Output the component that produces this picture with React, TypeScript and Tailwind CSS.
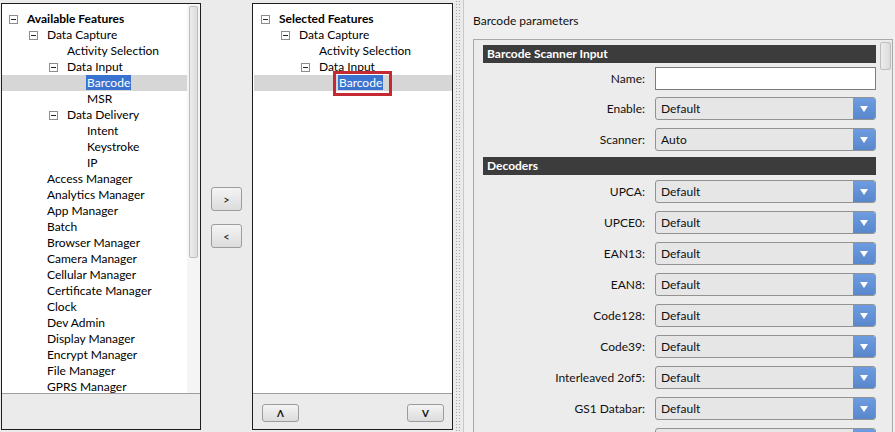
import React from "react";

type Node = { level: number; label: string; exp?: boolean; bold?: boolean; sel?: boolean; framed?: boolean };

const leftTree: Node[] = [
  { level: 0, label: "Available Features", exp: true, bold: true },
  { level: 1, label: "Data Capture", exp: true },
  { level: 2, label: "Activity Selection" },
  { level: 2, label: "Data Input", exp: true },
  { level: 3, label: "Barcode", sel: true },
  { level: 3, label: "MSR" },
  { level: 2, label: "Data Delivery", exp: true },
  { level: 3, label: "Intent" },
  { level: 3, label: "Keystroke" },
  { level: 3, label: "IP" },
  { level: 1, label: "Access Manager" },
  { level: 1, label: "Analytics Manager" },
  { level: 1, label: "App Manager" },
  { level: 1, label: "Batch" },
  { level: 1, label: "Browser Manager" },
  { level: 1, label: "Camera Manager" },
  { level: 1, label: "Cellular Manager" },
  { level: 1, label: "Certificate Manager" },
  { level: 1, label: "Clock" },
  { level: 1, label: "Dev Admin" },
  { level: 1, label: "Display Manager" },
  { level: 1, label: "Encrypt Manager" },
  { level: 1, label: "File Manager" },
  { level: 1, label: "GPRS Manager" },
];

const midTree: Node[] = [
  { level: 0, label: "Selected Features", exp: true, bold: true },
  { level: 1, label: "Data Capture", exp: true },
  { level: 2, label: "Activity Selection" },
  { level: 2, label: "Data Input", exp: true },
  { level: 3, label: "Barcode", sel: true, framed: true },
];

const pads = ["pl-[7px]", "pl-[27px]", "pl-[47px]", "pl-[67px]"];

function Expander() {
  return (
    <span className="w-[9px] h-[9px] border border-[#8c8c8c] bg-white flex items-center justify-center shrink-0">
      <span className="w-[5px] h-px bg-[#222]" />
    </span>
  );
}

function TreeRow({ n }: { n: Node }) {
  return (
    <div className={`h-[16px] flex items-center ${pads[n.level]} ${n.sel ? "bg-[#d6d6d6]" : ""}`}>
      {n.exp ? <Expander /> : <span className="w-[9px] shrink-0" />}
      {n.sel ? (
        <span className="ml-[8px] relative">
          <span className="bg-[#3a73cf] text-white px-[1px] leading-[15px] inline-block">{n.label}</span>
          {n.framed && (
            <span className="absolute left-[-5px] right-[-9px] top-[-3px] bottom-[-4px] border-[3px] border-[#c42a32]" />
          )}
        </span>
      ) : (
        <span className={`ml-[9px] whitespace-nowrap leading-[16px] ${n.bold ? "font-bold" : ""}`}>{n.label}</span>
      )}
    </div>
  );
}

function SmallBtn({ children, w, h }: { children: React.ReactNode; w: string; h: string }) {
  return (
    <div
      className={`${w} ${h} rounded-[3px] border border-[#9c9c9c] bg-gradient-to-b from-[#f4f4f4] to-[#dcdcdc] flex items-center justify-center text-[11px] leading-none text-[#111]`}
    >
      {children}
    </div>
  );
}

function Dropdown({ value }: { value: string }) {
  return (
    <div className="w-[221px] h-[23px] rounded-[3px] border border-[#929292] bg-[#e6e6e6] flex items-stretch overflow-hidden">
      <span className="flex-1 pl-[5px] flex items-center text-[#111]">{value}</span>
      <span className="w-[22px] bg-gradient-to-b from-[#6d9ce0] to-[#5887cc] flex items-center justify-center">
        <svg width="8" height="6" viewBox="0 0 8 6">
          <path d="M0 0 L8 0 L4 6 Z" fill="#ffffff" />
        </svg>
      </span>
    </div>
  );
}

function Row({ label, children, mt }: { label: string; children: React.ReactNode; mt: string }) {
  return (
    <div className={`flex items-center ${mt}`}>
      <span className="w-[162px] text-right text-[#111] whitespace-nowrap">{label}</span>
      <span className="ml-[10px]">{children}</span>
    </div>
  );
}

function Header({ title, mt }: { title: string; mt: string }) {
  return (
    <div className={`w-[393px] h-[18px] bg-[#3c3c3c] text-white font-bold pl-[4px] flex items-center ${mt}`}>{title}</div>
  );
}

const decoders = ["UPCA:", "UPCE0:", "EAN13:", "EAN8:", "Code128:", "Code39:", "Interleaved 2of5:", "GS1 Databar:"];

export default function App() {
  return (
    <div className="w-[895px] h-[432px] overflow-hidden bg-[#ebebeb] flex font-['Lato',sans-serif] text-[12px] text-black">
      {/* Left panel */}
      <div className="pt-[3px] pl-[1px] shrink-0">
        <div className="w-[200px] h-[427px] border border-[#1e1e1e] flex flex-col">
          <div className="flex-1 min-h-0 bg-white flex overflow-hidden">
            <div className="flex-1 pt-[7px]">
              {leftTree.map((n, i) => (
                <TreeRow key={i} n={n} />
              ))}
            </div>
            <div className="w-[13px] bg-[#f5f5f5] pt-[2px] px-[2px]">
              <div className="h-[252px] rounded-[2px] border border-[#bdbdbd] bg-gradient-to-r from-[#ececec] to-[#dcdcdc]" />
            </div>
          </div>
          <div className="h-[36px] border-t border-[#9e9e9e] bg-[#ebebeb]" />
        </div>
      </div>

      {/* Move buttons */}
      <div className="w-[51px] shrink-0 flex flex-col items-center pt-[187px] gap-[13px]">
        <SmallBtn w="w-[31px]" h="h-[24px]">&gt;</SmallBtn>
        <SmallBtn w="w-[31px]" h="h-[24px]">&lt;</SmallBtn>
      </div>

      {/* Middle panel */}
      <div className="pt-[3px] shrink-0">
        <div className="w-[201px] h-[427px] border border-[#1e1e1e] flex flex-col">
          <div className="flex-1 min-h-0 bg-white pt-[7px] pl-[1px]">
            {midTree.map((n, i) => (
              <TreeRow key={i} n={n} />
            ))}
          </div>
          <div className="h-[36px] border-t border-[#9e9e9e] bg-[#ebebeb] flex justify-between pl-[9px] pr-[8px] pt-[10px]">
            <SmallBtn w="w-[37px]" h="h-[18px]">
              <span className="font-bold text-[10px]">Λ</span>
            </SmallBtn>
            <SmallBtn w="w-[37px]" h="h-[18px]">
              <span className="font-bold text-[10px]">V</span>
            </SmallBtn>
          </div>
        </div>
      </div>

      {/* Splitter */}
      <div className="w-[10px] shrink-0 pl-[2px]">
        <div className="w-[6px] h-full bg-[radial-gradient(#a9a9a9_0.8px,transparent_0.9px)] bg-[length:3px_3px]" />
      </div>

      {/* Right panel */}
      <div className="flex-1 border-l border-[#c8c8c8] bg-[#efefef] pl-[9px] pt-[13px] overflow-hidden">
        <div className="leading-[16px] text-[#111]">Barcode parameters</div>
        <div className="mt-[10px] w-[420px] h-[400px] border border-[#a9a9a9] bg-[#ececec] flex">
          <div className="flex-1 pl-[9px] pt-[5px]">
            <Header title="Barcode Scanner Input" mt="" />
            <Row label="Name:" mt="mt-[4px]">
              <div className="w-[221px] h-[23px] border border-[#7c7c7c] bg-white" />
            </Row>
            <Row label="Enable:" mt="mt-[7px]">
              <Dropdown value="Default" />
            </Row>
            <Row label="Scanner:" mt="mt-[8px]">
              <Dropdown value="Auto" />
            </Row>
            <Header title="Decoders" mt="mt-[6px]" />
            {decoders.map((d, i) => (
              <Row key={d} label={d} mt={i === 0 ? "mt-[5px]" : "mt-[8px]"}>
                <Dropdown value="Default" />
              </Row>
            ))}
            <Row label="" mt="mt-[8px]">
              <Dropdown value="" />
            </Row>
          </div>
          <div className="w-[13px] pt-[2px] pl-[1px] pr-[1px]">
            <div className="h-[28px] rounded-[2px] border border-[#bdbdbd] bg-gradient-to-r from-[#ececec] to-[#dcdcdc]" />
          </div>
        </div>
      </div>
    </div>
  );
}
